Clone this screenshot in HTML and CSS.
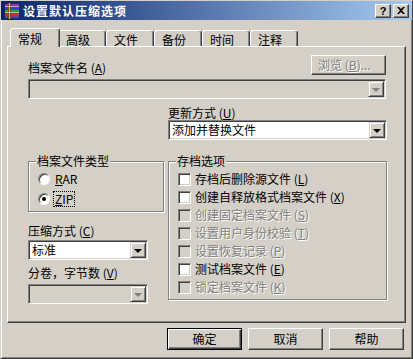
FILE: index.html
```html
<!DOCTYPE html>
<html lang="zh-CN">
<head>
    <meta charset="UTF-8">
    <title>设置默认压缩选项</title>
    <link rel="stylesheet" href="styles.css">
</head>
<body>
    <div class="window">
        <!-- Заголовок окна -->
        <div class="titlebar">
            <svg class="app-icon" width="16" height="16" viewBox="0 0 16 16">
                <rect x="1" y="1" width="14" height="3" fill="#a0309a"/>
                <rect x="1" y="4" width="14" height="3" fill="#2848c8"/>
                <rect x="1" y="7" width="14" height="3" fill="#28a038"/>
                <rect x="1" y="10" width="14" height="3" fill="#c83030"/>
                <rect x="1" y="13" width="14" height="2" fill="#6040a0"/>
                <rect x="4" y="0" width="3" height="16" fill="#6a4a20"/>
                <rect x="5" y="0" width="1" height="16" fill="#d8b060"/>
                <rect x="1" y="3" width="14" height="1" fill="#ffffff" opacity="0.5"/>
                <rect x="1" y="9" width="14" height="1" fill="#ffffff" opacity="0.5"/>
            </svg>
            <span class="title">设置默认压缩选项</span>
            <div class="title-buttons">
                <span class="tbtn">?</span>
                <span class="tbtn">
                    <svg width="8" height="7" viewBox="0 0 8 7">
                        <path d="M0 0h2l2 2 2-2h2L5 3.5 8 7H6L4 5 2 7H0l3-3.5z" fill="#000"/>
                    </svg>
                </span>
            </div>
        </div>

        <div class="content">
            <!-- Вкладки -->
            <div class="tabs">
                <div class="tab active">常规</div>
                <div class="tab">高级</div>
                <div class="tab">文件</div>
                <div class="tab">备份</div>
                <div class="tab">时间</div>
                <div class="tab">注释</div>
            </div>

            <div class="panel">
                <div class="name-row">
                    <span class="label">档案文件名 (<u>A</u>)</span>
                    <span class="btn browse disabled">浏览 (<u>B</u>)...</span>
                </div>
                <div class="combo disabled name-combo">
                    <span class="combo-text"></span>
                    <span class="drop"></span>
                </div>

                <div class="columns">
                    <div class="update">
                        <div class="label update-label">更新方式 (<u>U</u>)</div>
                        <div class="combo">
                            <span class="combo-text">添加并替换文件</span>
                            <span class="drop"></span>
                        </div>
                    </div>

                    <div class="left-col">
                        <fieldset class="group type-group">
                            <legend>档案文件类型</legend>
                            <div class="opt"><span class="radio"></span><span><u>R</u>AR</span></div>
                            <div class="opt"><span class="radio checked"></span><span class="focus"><u>Z</u>IP</span></div>
                        </fieldset>

                        <div class="label method-label">压缩方式 (<u>C</u>)</div>
                        <div class="combo small-combo">
                            <span class="combo-text">标准</span>
                            <span class="drop"></span>
                        </div>

                        <div class="label volume-label">分卷，字节数 (<u>V</u>)</div>
                        <div class="combo disabled small-combo volume-combo">
                            <span class="combo-text"></span>
                            <span class="drop"></span>
                        </div>
                    </div>

                    <fieldset class="group options-group">
                        <legend>存档选项</legend>
                        <div class="check"><span class="box"></span><span>存档后删除源文件 (<u>L</u>)</span></div>
                        <div class="check"><span class="box"></span><span>创建自释放格式档案文件 (<u>X</u>)</span></div>
                        <div class="check disabled"><span class="box"></span><span>创建固定档案文件 (<u>S</u>)</span></div>
                        <div class="check disabled"><span class="box"></span><span>设置用户身份校验 (<u>T</u>)</span></div>
                        <div class="check disabled"><span class="box"></span><span>设置恢复记录 (<u>P</u>)</span></div>
                        <div class="check"><span class="box"></span><span>测试档案文件 (<u>E</u>)</span></div>
                        <div class="check disabled"><span class="box"></span><span>锁定档案文件 (<u>K</u>)</span></div>
                    </fieldset>
                </div>
            </div>

            <div class="buttons">
                <span class="btn default">确定</span>
                <span class="btn">取消</span>
                <span class="btn">帮助</span>
            </div>
        </div>
    </div>
</body>
</html>
```

FILE: styles.css
```css
/* Классическое окно Windows */
body {
    margin: 0;
    background: #d4d0c8;
    font-family: "Noto Sans CJK SC", sans-serif;
    font-size: 12px;
    line-height: 14px;
    color: #000;
}

.window {
    width: 413px;
    height: 359px;
    box-sizing: border-box;
    border: 1px solid;
    border-color: #d4d0c8 #404040 #404040 #d4d0c8;
    box-shadow: inset 1px 1px #fff, inset -1px -1px #808080;
    background: #d4d0c8;
}

/* Заголовок */
.titlebar {
    height: 19px;
    display: flex;
    align-items: center;
    background: linear-gradient(to right, #0a246a, #a6caf0);
    color: #fff;
}

.app-icon {
    margin-left: 3px;
    flex: none;
}

.title {
    margin-left: 3px;
    font-weight: bold;
    letter-spacing: 1px;
}

.title-buttons {
    margin-left: auto;
    margin-right: 3px;
    display: flex;
    gap: 2px;
}

.tbtn {
    width: 16px;
    height: 14px;
    box-sizing: border-box;
    display: flex;
    align-items: center;
    justify-content: center;
    background: #d4d0c8;
    color: #000;
    font-family: "Liberation Sans", sans-serif;
    font-weight: bold;
    font-size: 11px;
    border: 1px solid;
    border-color: #fff #404040 #404040 #fff;
    box-shadow: inset -1px -1px #808080;
}

.content {
    padding: 0 6px;
}

/* Вкладки */
.tabs {
    display: flex;
    align-items: flex-end;
    height: 18px;
    margin-top: 8px;
    padding-left: 5px;
}

.tab {
    width: 48px;
    height: 16px;
    box-sizing: border-box;
    padding: 2px 0 0 7px;
    border: 1px solid;
    border-bottom: none;
    border-color: #fff #404040 #fff #fff;
    border-radius: 3px 3px 0 0;
    box-shadow: inset -1px 0 #808080;
    background: #d4d0c8;
}

.tab.active {
    width: 50px;
    height: 19px;
    margin: 0 -2px -1px -2px;
    padding-top: 3px;
    position: relative;
    z-index: 1;
}

.panel {
    height: 277px;
    box-sizing: border-box;
    border: 1px solid;
    border-color: #fff #404040 #404040 #fff;
    box-shadow: inset -1px -1px #808080;
    padding: 8px 19px 0 20px;
}

.name-row {
    display: flex;
    justify-content: space-between;
    align-items: flex-end;
}

u {
    text-decoration-thickness: 1px;
    text-underline-offset: 1px;
}

/* Кнопки */
.btn {
    width: 75px;
    height: 22px;
    box-sizing: border-box;
    display: flex;
    align-items: center;
    justify-content: center;
    border: 1px solid;
    border-color: #fff #404040 #404040 #fff;
    box-shadow: inset -1px -1px #808080;
    background: #d4d0c8;
}

.btn.default {
    border-color: #000;
    box-shadow: inset 1px 1px #fff, inset -1px -1px #404040, inset -2px -2px #808080;
}

.browse {
    height: 20px;
    justify-content: flex-start;
    padding-left: 6px;
}

.disabled,
.check.disabled span {
    color: #808080;
    text-shadow: 1px 1px #fff;
}

/* Выпадающие списки */
.combo {
    height: 20px;
    box-sizing: border-box;
    display: flex;
    align-items: center;
    padding: 1px;
    border: 1px solid;
    border-color: #808080 #fff #fff #808080;
    box-shadow: inset 1px 1px #404040, inset -1px -1px #d4d0c8;
    background: #fff;
}

.combo.disabled {
    background: #d4d0c8;
}

.combo-text {
    flex: 1;
    padding-left: 2px;
}

.drop {
    width: 16px;
    height: 16px;
    box-sizing: border-box;
    display: flex;
    align-items: center;
    justify-content: center;
    border: 1px solid;
    border-color: #d4d0c8 #404040 #404040 #d4d0c8;
    box-shadow: inset 1px 1px #fff, inset -1px -1px #808080;
    background: #d4d0c8;
}

.drop::after {
    content: "";
    border-top: 4px solid #000;
    border-left: 4px solid transparent;
    border-right: 4px solid transparent;
    margin-top: 1px;
}

.combo.disabled .drop::after {
    border-top-color: #808080;
}

.name-combo {
    margin-top: 4px;
}

.columns {
    display: grid;
    grid-template-columns: 136px 219px;
    column-gap: 4px;
    row-gap: 14px;
    align-items: start;
}

.update {
    grid-column: 2;
}

.update-label {
    margin-top: 7px;
    height: 14px;
}

/* Рамки групп */
.group {
    margin: 0;
    min-width: 0;
    border: 1px solid #808080;
    box-shadow: inset 1px 1px #fff, 1px 1px #fff;
}

.group legend {
    padding: 0 1px;
    margin-left: -2px;
    background: #d4d0c8;
    line-height: 14px;
}

.type-group {
    padding: 1px 0 2px 9px;
}

.opt {
    height: 20px;
    display: flex;
    align-items: center;
}

.radio {
    width: 12px;
    height: 12px;
    box-sizing: border-box;
    border-radius: 50%;
    border: 1px solid;
    border-color: #808080 #fff #fff #808080;
    box-shadow: inset 1px 1px #404040;
    background: #fff;
    margin-right: 5px;
    display: flex;
    align-items: center;
    justify-content: center;
}

.radio.checked::after {
    content: "";
    width: 4px;
    height: 4px;
    border-radius: 50%;
    background: #000;
}

.focus {
    outline: 1px dotted #000;
    padding: 0 1px;
    margin-left: -1px;
}

.method-label {
    margin-top: 12px;
}

.small-combo {
    width: 120px;
    margin-top: 2px;
}

.volume-label {
    margin-top: 6px;
}

.volume-combo {
    margin-top: 4px;
}

.options-group {
    padding: 2px 0 3px 9px;
}

.check {
    height: 18px;
    display: flex;
    align-items: center;
}

.box {
    width: 13px;
    height: 13px;
    box-sizing: border-box;
    border: 1px solid;
    border-color: #808080 #fff #fff #808080;
    box-shadow: inset 1px 1px #404040, inset -1px -1px #d4d0c8;
    background: #fff;
    margin-right: 4px;
}

.check.disabled .box {
    background: #d4d0c8;
}

/* Нижние кнопки */
.buttons {
    display: flex;
    justify-content: flex-end;
    gap: 6px;
    margin-top: 5px;
    padding-right: 2px;
}
```
